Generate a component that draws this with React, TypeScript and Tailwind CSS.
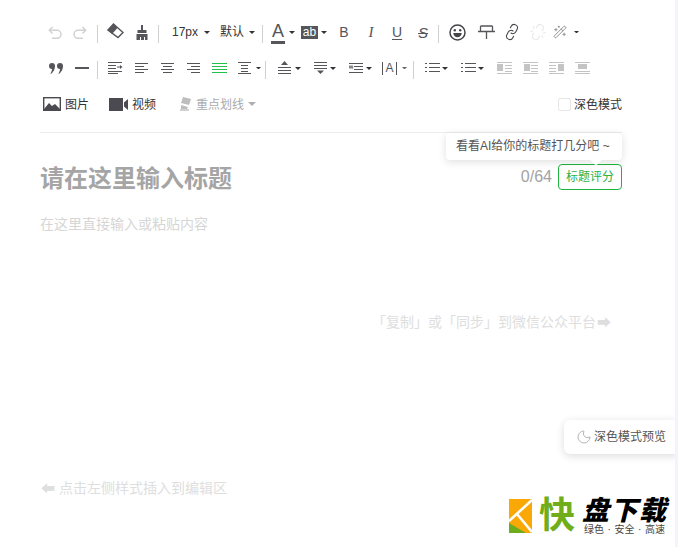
import React from "react";
import { Link, Unlink, WandSparkles, Moon } from "lucide-react";

function Caret({ color = "#333", size = 3 }: { color?: string; size?: number }) {
  return (
    <svg width={size * 2} height={size} viewBox="0 0 6 3" className="shrink-0">
      <path d="M0 0H6L3 3Z" fill={color} />
    </svg>
  );
}
function Div({ className = "" }: { className?: string }) {
  return <div className={"w-px h-[18px] bg-[#cfcfcf] shrink-0 " + className} />;
}
function Lines({ l, extra, color = "#55555a" }: { l: [number, number, number][]; extra?: React.ReactNode; color?: string }) {
  return (
    <svg width="15" height="14" viewBox="0 0 15 14" className="shrink-0">
      {l.map(([a, b, y], i) => (
        <rect key={i} x={a} y={y} width={b - a} height="1" fill={color} />
      ))}
      {extra}
    </svg>
  );
}
const Block = ({ x, y = 4, w = 6, h = 6 }: { x: number; y?: number; w?: number; h?: number }) => (
  <rect x={x} y={y} width={w} height={h} fill="#c4c4c4" />
);
const dots = <path d="M0 2h2v1H0ZM0 6h2v1H0ZM0 10h2v1H0Z" fill="#55555a" />;

export default function App() {
  return (
    <div className="relative w-[678px] h-[547px] bg-white overflow-hidden text-[12px] text-[#333]" style={{ fontFamily: '"Liberation Sans","Noto Sans CJK SC",sans-serif' }}>
      <div className="w-[675px] h-full flex flex-col">
        {/* Toolbar */}
        <div className="pt-5 flex flex-col gap-3">
          {/* Row 1 */}
          <div className="flex items-center pl-[48px] h-6">
            <svg width="14" height="13" viewBox="0 0 14 13" fill="none" stroke="#d2d2d2" strokeWidth="1.500">
              <path d="M4.500 1 1.300 4.300l3.200 3.200M1.500 4.300H9a4 4 0 0 1 0 8H4" />
            </svg>
            <svg className="ml-[11px]" width="14" height="13" viewBox="0 0 14 13" fill="none" stroke="#d2d2d2" strokeWidth="1.500">
              <path d="M9.500 1 12.700 4.300 9.500 7.500M12.500 4.300H5a4 4 0 0 0 0 8H10" />
            </svg>
            <Div className="ml-[10px] mt-[3px]" />
            <svg className="ml-[9px] -mt-[3px]" width="17" height="16" viewBox="0 0 17 16">
              <path d="M6.500 1 L1 7 L5 11 L10.500 5Z" fill="#55555a" />
              <path d="M6.500 1 L16 9.500 L11 14.500 L1 7Z" fill="none" stroke="#55555a" strokeWidth="1.400" />
            </svg>
            <svg className="ml-[12px]" width="12" height="15" viewBox="0 0 12 15">
              <path d="M5 0h2v5h3.500v3H1.500V5H5z M0.500 9h11v6H0.500z" fill="#55555a" />
              <rect x="4" y="12" width="1" height="3" fill="#fff" />
              <rect x="8" y="12" width="1" height="3" fill="#fff" />
            </svg>
            <Div className="ml-[10px] mt-[3px]" />
            <span className="ml-[13px] w-[27px] text-[12px] leading-none -mt-[1px]">17px</span>
            <div className="ml-[5px]"><Caret /></div>
            <span className="ml-[10px] text-[12px] leading-none -mt-[1px]">默认</span>
            <div className="ml-[5px]"><Caret /></div>
            <Div className="ml-[7px] mt-[3px]" />
            <div className="ml-[8px] flex flex-col items-center w-[14px] mt-[4px]">
              <span className="text-[18px] leading-[15px] text-[#55555a]">A</span>
              <div className="mt-[2px] w-[14px] h-[3px] bg-[#55555a]" />
            </div>
            <div className="ml-[4px]"><Caret /></div>
            <span className="ml-[6px] w-[17px] h-[13px] bg-[#55555a] text-white text-[12px] leading-[13px] text-center">ab</span>
            <div className="ml-[3px]"><Caret /></div>
            <span className="ml-[9px] w-4 text-center text-[14px] leading-none text-[#55555a]">B</span>
            <span className="ml-[11px] w-4 text-center text-[15px] leading-none text-[#55555a] italic" style={{ fontFamily: '"Liberation Serif",serif' }}>I</span>
            <span className="ml-[10px] w-4 text-center text-[14px] leading-none text-[#55555a] underline underline-offset-2">U</span>
            <span className="ml-[10px] w-4 text-center text-[15px] leading-none text-[#55555a] italic line-through">S</span>
            <Div className="ml-[7px] mt-[3px]" />
            <svg className="ml-[10px]" width="17" height="17" viewBox="0 0 17 17">
              <circle cx="8.500" cy="8.500" r="7.500" fill="none" stroke="#44444a" strokeWidth="1.500" />
              <circle cx="5.800" cy="6.300" r="1.200" fill="#44444a" />
              <circle cx="11.200" cy="6.300" r="1.200" fill="#44444a" />
              <path d="M4.300 9h8.400c0 2.600-1.900 4.200-4.200 4.200S4.300 11.600 4.300 9Z" fill="#44444a" />
            </svg>
            <svg className="ml-[12px]" width="17" height="14" viewBox="0 0 17 14" fill="none" stroke="#55555a" strokeWidth="1.300">
              <path d="M2.500 1h12M2.500 1v5.500M14.500 1v5.500M0 6.500h17M8.500 6.500V14" />
            </svg>
            <div className="ml-[9px] -rotate-[18deg]"><Link size={16} color="#44444a" strokeWidth={1.600} /></div>
            <div className="ml-[10px] -rotate-[18deg]"><Unlink size={16} color="#e8e8e8" strokeWidth={1.600} /></div>
            <div className="ml-[7px]"><WandSparkles size={14} color="#8a8a8e" strokeWidth={1.600} /></div>
            <div className="ml-[7px]"><Caret size={2.500} /></div>
          </div>
          {/* Row 2 */}
          <div className="flex items-center pl-[49px] h-6">
            <svg width="14" height="11" viewBox="0 0 14 11">
              <path d="M3 0a3 3 0 0 1 3 3c0 3-1.500 6-4 8l-.5-.5C2.500 9 3 7.500 3 6a3 3 0 0 1 0-6ZM11 0a3 3 0 0 1 3 3c0 3-1.500 6-4 8l-.5-.5c1-1.500 1.500-3 1.500-4.500a3 3 0 0 1 0-6Z" fill="#55555a" />
            </svg>
            <div className="ml-[12px] w-[14px] h-[2px] bg-[#55555a]" />
            <Div className="ml-[8px] mt-[3px]" />
            <div className="ml-[10px] flex gap-[11px]">
              <Lines l={[[0, 14, 1], [0, 8, 4], [0, 8, 7], [0, 14, 10], [0, 10, 12]]} extra={<path d="M9 5.500h3V4l2.500 2-2.500 2V6.500H9Z" fill="#55555a" />} />
              <Lines l={[[1, 14, 2], [1, 10, 5], [1, 14, 8], [1, 10, 11]]} />
              <Lines l={[[1, 14, 2], [3, 12, 5], [1, 14, 8], [3, 12, 11]]} />
              <Lines l={[[1, 14, 2], [5, 14, 5], [1, 14, 8], [5, 14, 11]]} />
              <Lines color="#1fc04f" l={[[0, 15, 2], [0, 15, 5], [0, 15, 8], [0, 15, 11]]} />
            </div>
            <div className="ml-[10px]">
              <Lines l={[[1, 14, 1], [4, 11, 4], [4, 11, 7], [4, 11, 10], [1, 14, 12]]} />
            </div>
            <div className="ml-[4px]"><Caret size={2.500} /></div>
            <Div className="ml-[4px] mt-[3px]" />
            <div className="ml-[11px]">
              <Lines l={[[1, 14, 6], [1, 14, 9], [1, 14, 12]]} extra={<path d="M7.500 0 11 4H4Z" fill="#55555a" />} />
            </div>
            <div className="ml-[3px]"><Caret /></div>
            <div className="ml-[12px]">
              <Lines l={[[1, 14, 1], [1, 14, 4], [1, 14, 7]]} extra={<path d="M7.500 13 11 9.500H4Z" fill="#55555a" />} />
            </div>
            <div className="ml-[2px]"><Caret /></div>
            <div className="ml-[13px]">
              <Lines l={[[0, 14, 2], [5, 14, 5], [5, 14, 8], [0, 14, 11]]} extra={<path d="M0 4.500h3v-1L4.500 6.500 3 8.500v-1H0Z" fill="#55555a" opacity=".7" />} />
            </div>
            <div className="ml-[2px]"><Caret /></div>
            <span className="ml-[10px] w-[15px] text-center text-[12px] leading-[13px] text-[#55555a] border-x border-[#55555a]">A</span>
            <div className="ml-[5px]"><Caret size={2.500} color="#666" /></div>
            <Div className="ml-[6px] mt-[3px]" />
            <div className="ml-[11px]"><Lines l={[[4, 15, 2], [4, 15, 6], [4, 15, 10]]} extra={dots} /></div>
            <div className="ml-[2px]"><Caret /></div>
            <div className="ml-[13px]"><Lines l={[[4, 15, 2], [4, 15, 6], [4, 15, 10]]} extra={dots} /></div>
            <div className="ml-[2px]"><Caret /></div>
            <div className="ml-[13px] flex gap-[11px]">
              <Lines color="#c4c4c4" l={[[0, 15, 1], [8, 15, 4], [8, 15, 7], [8, 15, 10], [0, 15, 12]]} extra={<Block x={0} y={3} w={6} h={7} />} />
              <Lines color="#c4c4c4" l={[[0, 15, 1], [8, 15, 4], [8, 15, 7], [8, 15, 10], [0, 15, 12]]} extra={<Block x={1} y={3} w={6} h={7} />} />
              <Lines color="#c4c4c4" l={[[0, 15, 1], [0, 7, 4], [0, 7, 7], [0, 7, 10], [0, 15, 12]]} extra={<Block x={9} y={3} w={6} h={7} />} />
              <Lines color="#c4c4c4" l={[[0, 15, 1], [0, 15, 10], [0, 15, 12]]} extra={<Block x={3} y={3} w={9} h={5} />} />
            </div>
          </div>
          {/* Row 3 */}
          <div className="flex items-center pl-[43px] h-6 text-[12px] text-[#333]">
            <div className="flex items-center gap-[4px] w-[66px] shrink-0">
              <svg width="18" height="14" viewBox="0 0 18 14">
                <rect x=".7" y=".7" width="16.600" height="12.600" fill="none" stroke="#4a4a50" strokeWidth="1.400" />
                <path d="M1 12 6 6l3 3 3-2 5 5v1H1Z" fill="#4a4a50" />
              </svg>
              <span className="mt-[1px]">图片</span>
            </div>
            <div className="flex items-center gap-[3px] w-[71px] shrink-0">
              <svg width="20" height="13" viewBox="0 0 20 13">
                <rect x="0" y="0" width="14" height="13" fill="#4a4a50" />
                <path d="M15 4.500 19 1v11l-4-3.500Z" fill="#4a4a50" />
              </svg>
              <span className="mt-[1px]">视频</span>
            </div>
            <div className="flex items-center gap-[4px] shrink-0 text-[#aaaaaa]">
              <svg width="12" height="14" viewBox="0 0 12 14">
                <path d="M3 0 11 2 9 8 1 6Z M1 8l7 2-1 2H1Z" fill="#bdbdbd" />
                <rect x="0" y="12" width="9" height="2" fill="#d0d0d0" />
              </svg>
              <span className="mt-[1px]">重点划线</span>
              <Caret size={4} color="#b0b0b0" />
            </div>
            <div className="ml-auto mr-[53px] flex items-center gap-[3px]">
              <div className="w-[13px] h-[13px] rounded-[2px] border border-[#e6e6e6] bg-white" />
              <span className="mt-[1px] text-[#333]">深色模式</span>
            </div>
          </div>
        </div>

        {/* Editor */}
        <div className="mx-10 mt-4 w-[582px] border-t border-[#ececec] relative">
          <div className="flex items-start justify-between pt-[31px]">
            <div className="text-[24px] font-bold leading-[30px] text-[#a5a5a5]">请在这里输入标题</div>
            <div className="flex items-center gap-[6px]">
              <span className="text-[16px] text-[#a3a3a3]">0/64</span>
              <div className="w-16 h-[26px] rounded-[4px] border border-[#1fb53f] text-[#2bb043] text-[12px] flex items-center justify-center">标题评分</div>
            </div>
          </div>
          <div className="mt-5 text-[14px] leading-5 text-[#d6d6d6]">在这里直接输入或粘贴内容</div>
          <div className="mt-[78px] pr-[11px] flex justify-end items-center gap-px text-[14px] leading-5 text-[#dedede]">
            <span>「复制」或「同步」到微信公众平台</span>
            <span>➡</span>
          </div>
          <div className="mt-[146px] flex items-center gap-[4px] pl-px text-[14px] leading-5 text-[#dedede]">
            <span>⬅</span>
            <span>点击左侧样式插入到编辑区</span>
          </div>

          {/* Tooltip */}
          <div className="absolute right-0 top-0 w-[176px] h-[27px] rounded-[4px] bg-white shadow-[0_2px_8px_rgba(0,0,0,0.13)] text-[12px] leading-[27px] pl-[10px] text-[#555] whitespace-nowrap">
            看看AI给你的标题打几分吧 ~
            <div className="absolute left-[146px] -bottom-[4px] w-2 h-2 rotate-45 bg-white" />
          </div>
        </div>
      </div>

      {/* Floating dark preview */}
      <div className="absolute left-[564px] top-[420px] w-[114px] h-[34px] rounded-l-[6px] bg-white shadow-[0_2px_8px_rgba(0,0,0,0.14)] flex items-center pl-[12px] gap-[2px] text-[12px] text-[#555]">
        <Moon size={16} color="#b5b5b5" strokeWidth={1.500} />
        <span>深色模式预览</span>
      </div>

      {/* Right edge strip */}
      <div className="absolute right-0 top-0 w-[3px] h-full bg-[#f1f5fb]" />

      {/* Watermark logo */}
      <div className="absolute left-[509px] top-[499px] flex items-start">
        <svg width="23" height="34" viewBox="0 0 23 34" className="shrink-0">
          <rect width="23" height="34" fill="#f9a806" />
          <path d="M0 24 L17 34 H0Z" fill="#6dac1c" />
          <path d="M23 1 L0 22 M8 15 L23 33" fill="none" stroke="#fff" strokeWidth="2.600" />
        </svg>
        <span className="ml-[7px] -mt-[3px] text-[36px] leading-[40px] font-bold text-[#6fae1a]">快</span>
        <div className="ml-[7px] flex flex-col items-start">
          <span className="text-[27px] leading-[25px] font-black italic tracking-[1.500px] text-black">盘下载</span>
          <div className="ml-[2px] w-[81px] flex justify-between text-[10px] leading-[11px] text-[#444]">
            <span>绿色</span><span>·</span><span>安全</span><span>·</span><span>高速</span>
          </div>
        </div>
      </div>
    </div>
  );
}
